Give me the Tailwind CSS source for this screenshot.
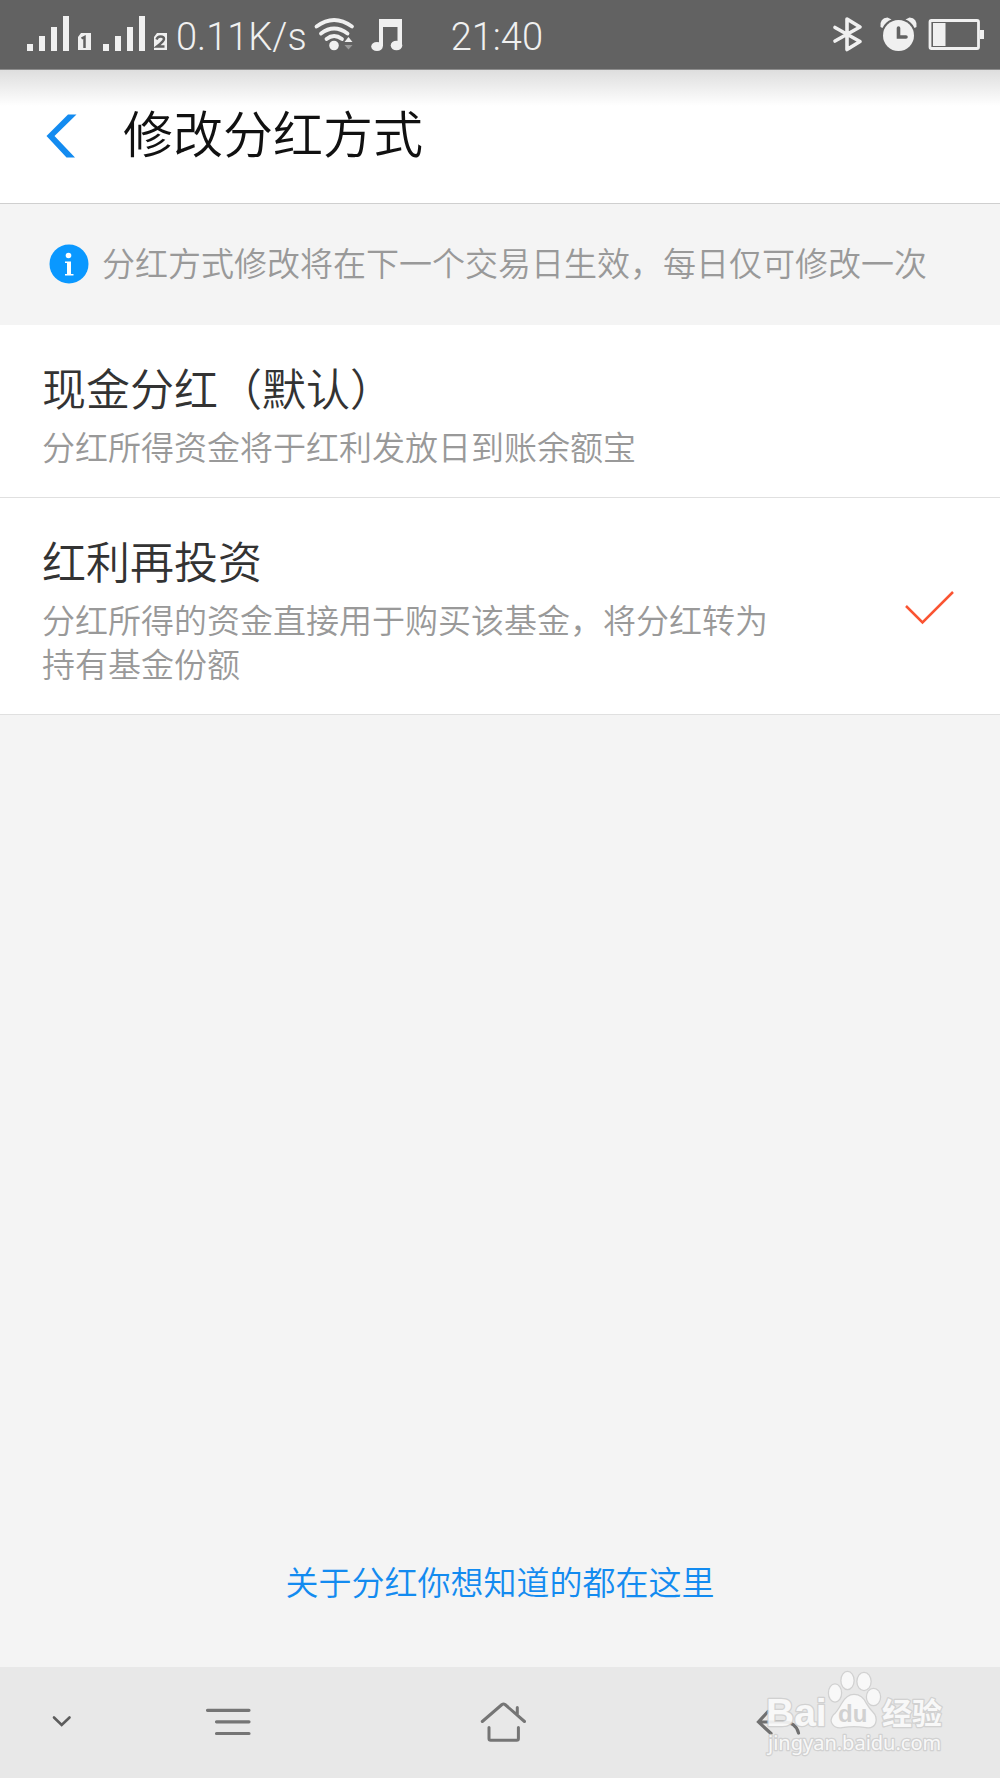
<!DOCTYPE html>
<html lang="zh-CN">
<head>
<meta charset="utf-8">
<meta name="viewport" content="width=device-width, initial-scale=1">
<title>修改分红方式</title>
<script src="https://cdn.jsdelivr.net/npm/@tailwindcss/browser@4"></script>
</head>
<body class="flex min-h-screen flex-col bg-[#f4f4f4] font-['Noto_Sans_CJK_SC',sans-serif] font-[350]">
  <!-- Status bar -->
  <div class="flex h-[70px] items-center justify-between border-b border-[#8c8c8c] bg-[#626262] pr-4 pl-[26px] font-[Roboto,sans-serif] text-[38px] leading-none font-light text-[#f0f0f0]">
    <div class="flex items-center">
      <svg class="h-[70px] w-[142px]" viewBox="26 0 142 70" fill="#f0f0f0" aria-label="信号">
        <path d="M27 44h6v7h-6zM39 36h6v15h-6zM51 27h6v24h-6zM63 16h6v35h-6zM103 44h6v7h-6zM115 36h6v15h-6zM127 27h6v24h-6zM139 16h6v35h-6z"/>
        <path d="M81 33h10v17H78V37zM157 33h10v17h-13V37z"/>
        <path d="M81.500 38.500l3-1.500v11M156.500 39.500q1-3 4-3 3.500 0 3.500 2.500 0 2-7 7.500h7.500" fill="none" stroke="#626262" stroke-width="2.500"/>
      </svg>
      <span class="ml-2 pt-1">0.11K/s</span>
      <svg class="ml-[6px] h-[70px] w-[92px]" viewBox="313 0 92 70" fill="none" stroke="#f0f0f0" stroke-linecap="round" aria-label="无线网络">
        <path d="M316.500 26.500Q334 13.500 352 26.500M321 33.500Q334 23.500 347.500 33.500M326.500 39Q334 33 342 39" stroke-width="3.800"/>
        <circle cx="334" cy="45.500" r="4.800" fill="#f0f0f0" stroke="none"/>
        <path d="M344.500 42l4-5 4 5z" fill="#f0f0f0" stroke="none"/><path d="M344.500 45l4 4.500 4-4.500z" fill="#999" stroke="none"/>
        <path d="M379 19h23v26.500h-4.500V27H383v19h-4z" fill="#f0f0f0" stroke="none"/>
        <ellipse cx="377" cy="46.500" rx="5.800" ry="4.600" fill="#f0f0f0" stroke="none"/><ellipse cx="396.500" cy="45.500" rx="5.800" ry="4.800" fill="#f0f0f0" stroke="none"/>
      </svg>
      <time class="ml-[46px] pt-1">21:40</time>
    </div>
    <svg class="h-[70px] w-[152px]" viewBox="832 0 152 70" fill="none" stroke="#f0f0f0" aria-label="蓝牙 闹钟 电量">
      <path d="M835 27.500L860 41.500L847 49.500V19L860 27L835 41" stroke-width="3.600" stroke-linejoin="round" stroke-linecap="round"/>
      <circle cx="898.500" cy="35.500" r="15.500" fill="#f0f0f0" stroke="none"/>
      <path d="M880.500 27q-1-9 7-9.500l4 2q-6 2-9 8.500zM916.500 27q1-9-7-9.500l-4 2q6 2 9 8.500z" fill="#f0f0f0" stroke="none"/>
      <path d="M898.500 28v9h7.500" stroke="#626262" stroke-width="3.600" stroke-linecap="round"/>
      <rect x="930" y="20.500" width="48.500" height="28" rx="1.500" stroke-width="2.800"/>
      <path d="M933 23h12.500v23H933zM980 30h4v9h-4z" fill="#f0f0f0" stroke="none"/>
    </svg>
  </div>

  <!-- Title bar -->
  <header class="flex h-[134px] items-center border-b border-[#cfcfcf] bg-linear-to-b from-[#dedede] to-white to-[36px] pb-[2px] pl-[46px]">
    <button class="flex" aria-label="返回">
      <svg class="h-[44px] w-[31px]" viewBox="0 0 31 44" fill="#138bf0"><path d="M0.500 22L22 0.500h8.500L8.500 22L29 43.500h-8.500z"/></svg>
    </button>
    <h1 class="ml-[46px] pb-[10px] text-[50px] leading-[60px] text-[#111]">修改分红方式</h1>
  </header>

  <main class="flex flex-1 flex-col">
    <p class="flex h-[121px] items-center pb-[2px] pl-[49px] text-[33px] leading-[44px] whitespace-nowrap text-[#999]">
      <svg class="mr-[13px] size-10 shrink-0" viewBox="0 0 40 40" fill="#fff" aria-hidden="true">
        <circle cx="20" cy="20" r="19.500" fill="#0a98ff"/>
        <circle cx="19.500" cy="11.500" r="2.800"/><path d="M16 17.500h6v12.500h2.500v1.500h-8.500V30H18v-11h-2z"/>
      </svg>
      <span class="pb-1">分红方式修改将在下一个交易日生效，每日仅可修改一次</span>
    </p>

    <form class="bg-white" aria-label="分红方式">
      <label class="flex items-center gap-[110px] border-b border-[#e0e0e0] pt-8 pr-[46px] pb-[29px] pl-[42px]">
        <input type="radio" name="dividend" value="cash" class="peer sr-only">
        <span class="flex-1">
          <span class="block text-[44px] leading-[60px] text-[#333]">现金分红（默认）</span>
          <span class="mt-[7px] block text-[33px] leading-[44px] text-[#999]">分红所得资金将于红利发放日到账余额宝</span>
        </span>
        <svg class="invisible h-[34px] w-[49px] peer-checked:visible" viewBox="0 0 49 34" fill="none" stroke="#fa5432" stroke-width="2.500"><path d="M1 15L17.500 31.500L48 1"/></svg>
      </label>
      <label class="flex items-center gap-[110px] border-b border-[#e0e0e0] pt-8 pr-[46px] pb-[29px] pl-[42px]">
        <input type="radio" name="dividend" value="reinvest" class="peer sr-only" checked>
        <span class="flex-1">
          <span class="block text-[44px] leading-[60px] text-[#333]">红利再投资</span>
          <span class="mt-[7px] block text-[33px] leading-[44px] text-[#999]">分红所得的资金直接用于购买该基金，将分红转为持有基金份额</span>
        </span>
        <svg class="invisible h-[34px] w-[49px] peer-checked:visible" viewBox="0 0 49 34" fill="none" stroke="#fa5432" stroke-width="2.500"><path d="M1 15L17.500 31.500L48 1"/></svg>
      </label>
    </form>

    <a href="#" class="mx-auto mt-auto mb-16 text-[33px] leading-[44px] text-[#138bf0]">关于分红你想知道的都在这里</a>
  </main>

  <!-- System navigation -->
  <nav class="relative flex h-[111px] items-center bg-[#e8e8e8] pb-[2px] pl-[52px]">
    <button class="flex" aria-label="收起"><svg class="h-12 w-5" viewBox="52 1698 20 48" fill="none" stroke="#5c5c5c" stroke-width="2.600" stroke-linecap="round"><path d="M54 1717.500l7.700 7.500 7.800-7.500"/></svg></button>
    <button class="ml-[132px] flex" aria-label="菜单"><svg class="h-12 w-12" viewBox="204 1698 48 48" fill="none" stroke="#757575" stroke-width="3.200" stroke-linecap="round"><path d="M207.500 1710.300H249M216.500 1721.800H249M216.500 1733.500H249"/></svg></button>
    <button class="ml-[228px] flex" aria-label="主页"><svg class="h-12 w-12" viewBox="480 1698 48 48" fill="none" stroke="#757575" stroke-width="3" stroke-linecap="round" stroke-linejoin="round"><path d="M482.300 1721.500L502 1704.500q1.500-1 3 0L524.500 1721.500M517.300 1707.500v7M489 1727.500v11q0 1.700 1.700 1.700h26q1.700 0 1.700-1.700v-11"/></svg></button>
    <button class="ml-[228px] flex" aria-label="后退"><svg class="h-12 w-12" viewBox="756 1698 48 48" fill="none" stroke="#707070" stroke-width="3.200" stroke-linecap="round"><path d="M768 1711.500L758.500 1722l12.500 11.500M759 1722h24q13 0 15.500 11"/></svg></button>
    <svg class="pointer-events-none absolute top-0 right-[50px] h-[104px] w-[190px] opacity-90" viewBox="760 1667 190 104" fill="#fafafa" stroke="#cfcfcf" stroke-width="2.500" stroke-linejoin="round" paint-order="stroke" aria-label="Baidu 经验">
      <text x="766" y="1726" font-family="Liberation Sans, sans-serif" font-size="39" font-weight="700">Bai</text>
      <ellipse cx="835" cy="1693" rx="6" ry="8.500"/><ellipse cx="847.500" cy="1680.500" rx="6" ry="8.500"/><ellipse cx="864" cy="1681.500" rx="6.500" ry="8.500"/><ellipse cx="873.500" cy="1697" rx="6.500" ry="8"/>
      <path d="M854 1695q-7 0-12 9t-8 11q-4 5-1 9 3 4 9 3 12-2 24 0 7 1 9-4 2-6-3-11-3-3-6-8-4-9-12-9z"/>
      <text x="838" y="1722" font-family="Liberation Sans, sans-serif" font-size="24" font-weight="700" fill="#cfcfcf" stroke="none">du</text>
      <text x="882" y="1724" font-family="Noto Sans CJK SC, sans-serif" font-size="30" font-weight="700">经验</text>
      <text x="768" y="1750" font-family="Noto Sans, sans-serif" font-size="20" font-weight="400">jingyan.baidu.com</text>
    </svg>
  </nav>
</body>
</html>
